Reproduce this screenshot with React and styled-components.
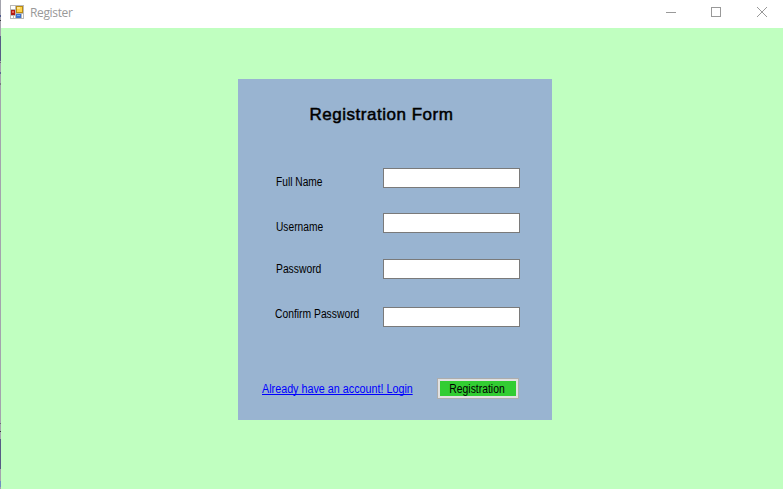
import React from "react";
import styled, { createGlobalStyle } from "styled-components";

const GlobalStyle = createGlobalStyle`
  * { box-sizing: border-box; }
  html, body { margin: 0; padding: 0; overflow: hidden; }
  body { font-family: "Liberation Sans", Arial, sans-serif; }
`;

const Desktop = styled.div`
  width: 783px;
  height: 489px;
  padding-left: 1px;
  background: linear-gradient(
    #a3a3ad 0 15px, #4a5688 15px 17px, #a3a3ad 17px 20px, #33343c 20px 21px,
    #a3a3ad 21px 36px, #565c85 36px 61px, #a3a3ad 61px 62px, #6b6b74 62px 63px,
    #a3a3ad 63px 72px, #5c6790 72px 74px, #a3a3ad 74px 83px, #77777f 83px 85px,
    #a3a3ad 85px 423px, #6b6b74 423px 424px, #a3a3ad 424px 431px,
    #33343c 431px 432px, #a3a3ad 432px 439px, #565c85 439px 469px,
    #a3a3ad 469px 481px, #6d8fc0 481px 487px, #a3a3ad 487px
  );
`;

const Window = styled.main`
  display: flex;
  flex-direction: column;
  height: 100%;
  background: #c0ffc0;
`;

const TitleBar = styled.header`
  display: flex;
  flex: none;
  align-items: flex-start;
  height: 28px;
  padding-left: 9px;
  background: #fff;
`;

const AppIcon = styled.svg`
  flex: none;
  width: 14px;
  height: 14px;
  margin-top: 5px;
`;

const WindowTitle = styled.span`
  flex: 1;
  margin: 5px 0 0 6px;
  color: #999;
  font: 12px/16px "Open Sans", "Noto Sans", sans-serif;
  letter-spacing: -0.35px;
`;

const Controls = styled.div`
  display: flex;
`;

const ControlButton = styled.button`
  display: flex;
  justify-content: center;
  width: 45.5px;
  height: 28px;
  padding: 7px 0 0 3px;
  border: 0;
  background: none;
`;

const ControlGlyph = styled.svg`
  width: 10px;
  height: 10px;
  fill: none;
  stroke: #999;
  overflow: visible;
`;

const Content = styled.section`
  flex: 1;
  padding: 51px 0 0 237px;
`;

const Panel = styled.form`
  width: 314px;
  height: 341px;
  background: #99b4d1;
`;

const Heading = styled.h1`
  margin: 0;
  padding: 26px 0 0 71.5px;
  height: 89px;
  color: #000;
  font-size: 17px;
  line-height: 20px;
  font-weight: 400;
  letter-spacing: 0.52px;
  white-space: nowrap;
  -webkit-text-stroke: 0.5px #000;
`;

const Row = styled.div`
  display: flex;
  align-items: flex-start;
  height: ${(p) => p.$height}px;
`;

const Label = styled.label`
  flex: none;
  width: ${(p) => 145 - p.$indent}px;
  margin: ${(p) => p.$top}px 0 0 ${(p) => p.$indent}px;
  font-size: 12px;
  line-height: 14px;
  white-space: nowrap;
  transform: scaleX(${(p) => p.$scale});
  transform-origin: left;
`;

const Input = styled.input`
  width: 137px;
  height: 20px;
  padding: 2px;
  border: 1px solid #7a7a7a;
  border-radius: 0;
  outline: 0;
  background: #fff;
`;

const Actions = styled.div`
  display: flex;
  align-items: flex-start;
  padding: 0 0 0 24px;
`;

const LoginLink = styled.a`
  display: flex;
  flex: none;
  width: 175px;
  margin-top: 4px;
  color: #00f;
  font-size: 12px;
  line-height: 14px;
  white-space: nowrap;
`;

const LinkText = styled.span`
  height: 14px;
  background: linear-gradient(#00f, #00f) 0 12px / 100% 1px no-repeat;
  transform: scaleX(0.897);
  transform-origin: left;
`;

const SubmitButton = styled.button`
  display: flex;
  align-items: center;
  justify-content: center;
  width: 82px;
  height: 21px;
  padding: 0 2px 0 0;
  border: 1px solid #adadad;
  box-shadow: inset 0 0 0 2px #e1e1e1;
  background: #32cd32;
  color: #000;
  font: 12px/14px "Liberation Sans", Arial, sans-serif;
`;

const ButtonText = styled.span`
  transform: scaleX(0.865);
`;

const fields = [
  { id: "fullName", label: "Full Name", top: 7, indent: 38, scale: 0.85, height: 45 },
  { id: "username", label: "Username", top: 7, indent: 38, scale: 0.85, height: 46 },
  { id: "password", label: "Password", top: 3, indent: 38, scale: 0.86, height: 48 },
  { id: "confirm", label: "Confirm Password", top: 0, indent: 37, scale: 0.86, height: 71 },
];

export default function App() {
  return (
    <Desktop>
      <GlobalStyle />
      <Window>
        <TitleBar>
          <AppIcon viewBox="0 0 14 14" shapeRendering="crispEdges">
            <path d="M0 0h14v14H0z" fill="#b9b9b9" />
            <path d="M1 1h4v3H1zM1 11h2v2H1zM4 11h1v2H4zM12 9h1v4h-1z" fill="#fff" />
            <path d="M1 5h4v5H1z" fill="#b31b14" />
            <path d="M2 6h2v2H2z" fill="#e8665a" />
            <path d="M6 1h7v7H6z" fill="#b98b13" />
            <path d="M7 2h5v5H7z" fill="#ffd34d" />
            <path d="M7 2h3v2H7z" fill="#ffe690" />
            <path d="M6 9h5v4H6z" fill="#3d72cf" />
            <path d="M7 10h3v1H7z" fill="#79aaf4" />
          </AppIcon>
          <WindowTitle>Register</WindowTitle>
          <Controls>
            <ControlButton type="button" aria-label="Minimize">
              <ControlGlyph viewBox="0 0 10 10" shapeRendering="crispEdges"><path d="M0 5.5h10" /></ControlGlyph>
            </ControlButton>
            <ControlButton type="button" aria-label="Maximize">
              <ControlGlyph viewBox="0 0 10 10" shapeRendering="crispEdges"><path d="M.5 .5h9v9h-9z" /></ControlGlyph>
            </ControlButton>
            <ControlButton type="button" aria-label="Close">
              <ControlGlyph viewBox="0 0 10 10"><path d="M0 0l10 10M10 0L0 10" /></ControlGlyph>
            </ControlButton>
          </Controls>
        </TitleBar>
        <Content>
          <Panel>
            <Heading>Registration Form</Heading>
            {fields.map((f) => (
              <Row key={f.id} $height={f.height}>
                <Label htmlFor={f.id} $top={f.top} $indent={f.indent} $scale={f.scale}>{f.label}</Label>
                <Input id={f.id} />
              </Row>
            ))}
            <Actions>
              <LoginLink><LinkText>Already have an account! Login</LinkText></LoginLink>
              <SubmitButton type="button"><ButtonText>Registration</ButtonText></SubmitButton>
            </Actions>
          </Panel>
        </Content>
      </Window>
    </Desktop>
  );
}
